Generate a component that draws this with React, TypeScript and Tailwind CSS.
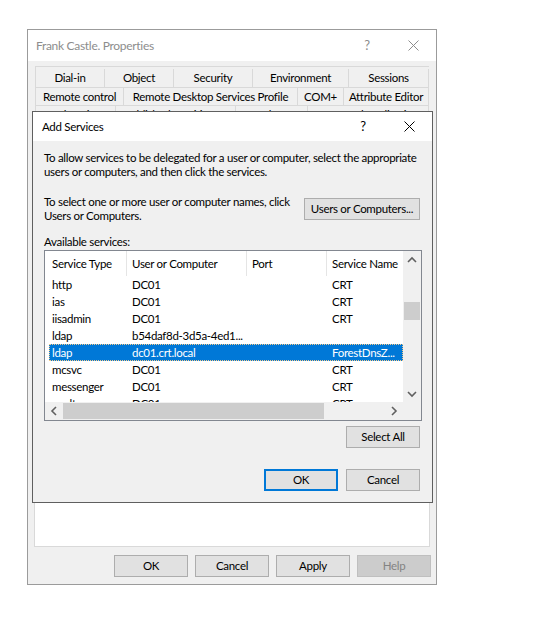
import React from "react";

type Tab = { label: string; w: string };

const tabRows: Tab[][] = [
  [
    { label: "Dial-in", w: "w-[69px]" },
    { label: "Object", w: "w-[69px]" },
    { label: "Security", w: "w-[79px]" },
    { label: "Environment", w: "w-[96px]" },
    { label: "Sessions", w: "flex-1" },
  ],
  [
    { label: "Remote control", w: "w-[88px]" },
    { label: "Remote Desktop Services Profile", w: "w-[174px]" },
    { label: "COM+", w: "w-[46px]" },
    { label: "Attribute Editor", w: "flex-1" },
  ],
  [
    { label: "Delegation", w: "w-[80px]" },
    { label: "Published Certificates", w: "w-[120px]" },
    { label: "Member Of", w: "w-[72px]" },
    { label: "Password Replication", w: "flex-1" },
  ],
];

const services = [
  ["http", "DC01", "", "CRT"],
  ["ias", "DC01", "", "CRT"],
  ["iisadmin", "DC01", "", "CRT"],
  ["ldap", "b54daf8d-3d5a-4ed1...", "", ""],
  ["ldap", "dc01.crt.local", "", "ForestDnsZ..."],
  ["mcsvc", "DC01", "", "CRT"],
  ["messenger", "DC01", "", "CRT"],
  ["msdtc", "DC01", "", "CRT"],
];

// thin caption X
const CloseIcon = ({ color }: { color: string }) => (
  <svg width="11" height="11" viewBox="0 0 11 11">
    <path d="M0.5 0.5 L10.5 10.5 M10.5 0.5 L0.5 10.5" stroke={color} strokeWidth="1" />
  </svg>
);

const Chevron = ({ dir }: { dir: "up" | "down" | "left" | "right" }) => {
  const pts = {
    up: "1,6 5,2 9,6",
    down: "1,2 5,6 9,2",
    left: "6,1 2,5 6,9",
    right: "2,1 6,5 2,9",
  }[dir];
  const vertical = dir === "up" || dir === "down";
  return (
    <svg width={vertical ? 10 : 8} height={vertical ? 8 : 10} viewBox={vertical ? "0 0 10 8" : "0 0 8 10"}>
      <polyline points={pts} fill="none" stroke="#606060" strokeWidth="1.6" />
    </svg>
  );
};

interface WinButtonProps {
  children: React.ReactNode;
  className?: string;
  isDefault?: boolean;
  disabled?: boolean;
}

const WinButton = ({ children, className = "", isDefault, disabled }: WinButtonProps) => (
  <button
    className={
      "flex items-center justify-center h-[22px] whitespace-nowrap leading-none " +
      (isDefault
        ? "border-2 border-[#0078d7] bg-[#e1e1e1] text-black "
        : disabled
        ? "border border-[#bfbfbf] bg-[#cccccc] text-[#838383] "
        : "border border-[#adadad] bg-[#e1e1e1] text-black ") +
      className
    }
  >
    {children}
  </button>
);

const ServiceList = () => (
  <div className="mt-[1px] h-[171px] border border-[#828790] bg-white flex flex-col">
    <div className="flex h-[151px]">
      {/* list content */}
      <div className="w-[358px] overflow-hidden whitespace-nowrap">
        <div className="flex h-[25px] items-center text-black">
          <div className="w-[82px] h-full flex items-center pl-[7px] border-r border-[#e5e5e5]">Service Type</div>
          <div className="w-[120px] h-full flex items-center pl-[5px] border-r border-[#e5e5e5]">User or Computer</div>
          <div className="w-[80px] h-full flex items-center pl-[5px] border-r border-[#e5e5e5]">Port</div>
          <div className="flex-1 h-full flex items-center pl-[5px]">Service Name</div>
        </div>
        {services.map((s, i) => {
          const selected = i === 4;
          return (
            <div
              key={i}
              className={
                "ml-[4px] flex h-[17px] items-center " +
                (selected
                  ? "bg-[#0078d7] text-white outline-1 outline-dotted outline-[#f3c98b] -outline-offset-1"
                  : "text-black")
              }
            >
              <div className="w-[77px] pl-[3px]">{s[0]}</div>
              <div className="w-[120px] pl-[6px]">{s[1]}</div>
              <div className="w-[80px] pl-[6px]">{s[2]}</div>
              <div className="flex-1 pl-[6px]">{s[3]}</div>
            </div>
          );
        })}
      </div>
      {/* vertical scrollbar */}
      <div className="w-[18px] bg-[#f0f0f0] flex flex-col">
        <div className="h-[17px] flex items-center justify-center">
          <Chevron dir="up" />
        </div>
        <div className="h-[34px]" />
        <div className="h-[18px] mx-[1px] bg-[#cdcdcd]" />
        <div className="flex-1" />
        <div className="h-[17px] flex items-center justify-center">
          <Chevron dir="down" />
        </div>
      </div>
    </div>
    {/* horizontal scrollbar */}
    <div className="flex h-[18px]">
      <div className="w-[358px] bg-[#f0f0f0] flex">
        <div className="w-[18px] flex items-center justify-center">
          <Chevron dir="left" />
        </div>
        <div className="w-[261px] my-[1px] bg-[#cdcdcd]" />
        <div className="flex-1" />
        <div className="w-[18px] flex items-center justify-center">
          <Chevron dir="right" />
        </div>
      </div>
      <div className="flex-1 bg-[#f0f0f0]" />
    </div>
  </div>
);

const AddServicesDialog = () => (
  <div className="absolute left-[4px] top-[81px] w-[401px] h-[392px] overflow-hidden border border-[#5f5f5f] bg-[#f0f0f0] flex flex-col">
    <div className="h-[29px] shrink-0 bg-white flex items-center">
      <div className="flex-1 pl-[9px] text-black">Add Services</div>
      <div className="w-[46px] h-full flex items-center justify-center text-[13px] text-black">?</div>
      <div className="w-[46px] h-full flex items-center justify-center">
        <CloseIcon color="#000000" />
      </div>
    </div>
    <div className="flex-1 pl-[11px] pr-[10px] pt-[10px] flex flex-col leading-[14px] text-black whitespace-nowrap">
      <p>
        To allow services to be delegated for a user or computer, select the appropriate
        <br />
        users or computers, and then click the services.
      </p>
      <div className="mt-[16px] flex items-start justify-between">
        <p>
          To select one or more user or computer names, click
          <br />
          Users or Computers.
        </p>
        <WinButton className="mt-[3px] mr-[2px] h-[21px] w-[116px]">Users or Computers...</WinButton>
      </div>
      <p className="mt-[12px]">Available services:</p>
      <ServiceList />
      <div className="mt-[5px] flex justify-end">
        <WinButton className="mr-[2px] w-[74px]">Select All</WinButton>
      </div>
      <div className="mt-[21px] flex justify-end gap-[8px]">
        <WinButton isDefault className="w-[74px]">
          OK
        </WinButton>
        <WinButton className="mr-[2px] w-[74px]">Cancel</WinButton>
      </div>
    </div>
  </div>
);

const App = () => {
  return (
    <div className="min-h-screen bg-white pt-[29px] pl-[27px] text-[11.5px] tracking-[-0.3px] font-[family-name:Lato,Liberation_Sans,sans-serif]">
      <div className="relative w-[410px] h-[556px] border border-[#9b9b9b] bg-[#f0f0f0] flex flex-col">
        {/* title bar */}
        <div className="h-[31px] shrink-0 bg-white flex items-center">
          <div className="flex-1 pl-[8px] text-[12px] text-[#8d8d8d]">Frank Castle. Properties</div>
          <div className="w-[46px] h-full flex items-center justify-center text-[13px] text-[#8d8d8d]">?</div>
          <div className="w-[46px] h-full flex items-center justify-center">
            <CloseIcon color="#8d8d8d" />
          </div>
        </div>

        {/* tabs */}
        <div className="mx-[7px] pt-[5px]">
          {tabRows.map((row, r) => (
            <div
              key={r}
              className={
                "flex border-t border-l border-[#d9d9d9] " + (r === 0 ? "h-[21px] pt-[2px]" : "h-[18px]")
              }
            >
              {row.map((t) => (
                <div
                  key={t.label}
                  className={t.w + " flex items-center justify-center border-r border-[#d9d9d9] whitespace-nowrap text-black"}
                >
                  {t.label}
                </div>
              ))}
            </div>
          ))}
        </div>

        {/* tab page */}
        <div className="flex-1 mx-[6px] border border-[#d9d9d9] bg-white" />

        {/* bottom buttons */}
        <div className="mt-[8px] mb-[7px] pr-[5px] flex justify-end gap-[7px]">
          <WinButton className="w-[74px]">OK</WinButton>
          <WinButton className="w-[74px]">Cancel</WinButton>
          <WinButton className="w-[74px]">Apply</WinButton>
          <WinButton disabled className="w-[74px]">
            Help
          </WinButton>
        </div>

        <AddServicesDialog />
      </div>
    </div>
  );
};

export default App;
